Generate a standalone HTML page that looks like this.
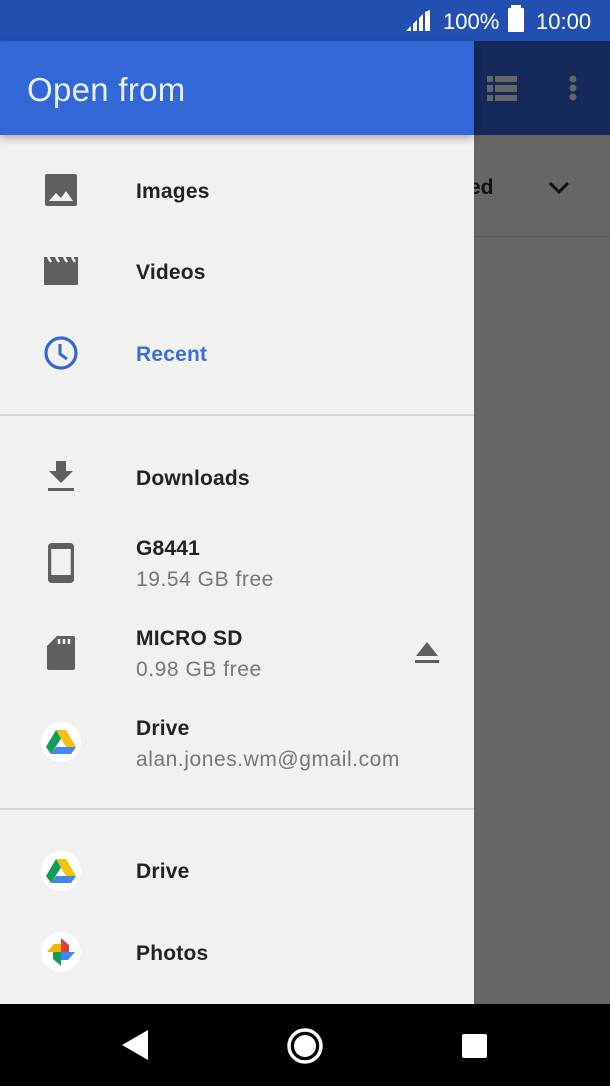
<!DOCTYPE html>
<html><head><meta charset="utf-8"><style>
*{margin:0;padding:0;box-sizing:border-box}
body{width:610px;height:1086px;position:relative;overflow:hidden;font-family:"Liberation Sans",Roboto,sans-serif;background:#666}
.abs{position:absolute}
.t{position:absolute;left:136px;font-size:21px;font-weight:bold;color:#222;line-height:1;letter-spacing:0.2px}
.s{position:absolute;left:136px;font-size:21px;color:#777;line-height:1;letter-spacing:0.55px}
.ic{position:absolute}
</style></head><body>
<div class="abs" style="left:0;top:0;width:610px;height:41px;background:#2350b0"></div>
<svg class="abs" style="left:405px;top:10px" width="26" height="22" viewBox="0 0 26 22" fill="#fff"><path d="M1 21L6 16V21Z"/><path d="M8 21V14L12 10V21Z"/><path d="M14 21V8L18 4V21Z"/><path d="M20 21V2L25 0V21Z"/></svg>
<div class="abs" style="left:443px;top:9px;color:#fff;font-size:22px">100%</div>
<div class="abs" style="left:508px;top:8px;width:16px;height:24px;background:#fff;border-radius:1px"></div>
<div class="abs" style="left:511px;top:5px;width:10px;height:4px;background:#fff"></div>
<div class="abs" style="left:536px;top:9px;color:#fff;font-size:22px">10:00</div>
<div class="abs" style="left:474px;top:41px;width:136px;height:94px;background:#15295a"></div>
<svg class="abs" style="left:487px;top:76px" width="30" height="26" viewBox="0 0 30 26" fill="#666"><rect x="0" y="0" width="6" height="6"/><rect x="8" y="0" width="22" height="6"/><rect x="0" y="9" width="6" height="7"/><rect x="8" y="9" width="22" height="7"/><rect x="0" y="19" width="6" height="6"/><rect x="8" y="19" width="22" height="6"/></svg>
<svg class="abs" style="left:566px;top:74px" width="14" height="30" fill="#666"><circle cx="7" cy="5" r="3.5"/><circle cx="7" cy="14" r="3.5"/><circle cx="7" cy="23" r="3.5"/></svg>
<div class="abs" style="left:474px;top:236px;width:136px;height:1px;background:#5a5a5a"></div>
<div class="abs" style="left:474px;top:176px;width:40px;height:30px;overflow:hidden"><div style="position:absolute;left:-5px;top:0;font-size:21px;color:#111;font-weight:bold">ed</div></div>
<svg class="abs" style="left:547px;top:180px" width="24" height="16"><path d="M3 3 L12 12 L21 3" stroke="#111" stroke-width="3" fill="none"/></svg>
<div class="abs" style="left:0;top:135px;width:474px;height:869px;background:#f1f1f1"></div>
<div class="abs" style="left:0;top:41px;width:474px;height:94px;background:#3367d6;box-shadow:0 3px 8px rgba(0,0,0,.3)"></div>
<div class="abs" style="left:27px;top:71px;font-size:33px;color:#e8efff;letter-spacing:0.3px">Open from</div>

<svg class="ic" style="left:45px;top:174px" width="32" height="32" viewBox="0 0 32 32"><rect x="0" y="0" width="32" height="32" rx="2" fill="#5f5f5f"/><path d="M4 27 L11 19 L16 24 L21 17 L28 27Z" fill="#f1f1f1"/></svg>
<div class="t" style="top:181px">Images</div>
<svg class="ic" style="left:44px;top:257px" width="34" height="28" viewBox="0 0 34 28"><rect x="0" y="6" width="34" height="22" rx="1" fill="#5f5f5f"/><rect x="0" y="0" width="34" height="6" fill="#5f5f5f"/><path d="M4 0l3 5 M12 0l3 5 M20 0l3 5 M28 0l3 5" stroke="#f1f1f1" stroke-width="2.5"/></svg>
<div class="t" style="top:262px">Videos</div>
<svg class="ic" style="left:43px;top:335px" width="36" height="36" viewBox="0 0 36 36"><circle cx="18" cy="18" r="15" stroke="#3367d6" stroke-width="3.2" fill="none"/><path d="M17 9v10l7 5" stroke="#3367d6" stroke-width="3" fill="none"/></svg>
<div class="t" style="top:344px;color:#3a6fd8">Recent</div>
<div class="abs" style="left:0;top:414px;width:474px;height:2px;background:#d8d8d8"></div>

<svg class="ic" style="left:48px;top:461px" width="26" height="32" viewBox="0 0 26 32"><path d="M8 0h10v10h7L13 22 1 10h7z" fill="#5f5f5f"/><rect x="0" y="27" width="26" height="3" fill="#5f5f5f"/></svg>
<div class="t" style="top:468px">Downloads</div>
<svg class="ic" style="left:48px;top:543px" width="26" height="40" viewBox="0 0 26 40"><rect x="1.5" y="1.5" width="23" height="37" rx="3" stroke="#5f5f5f" stroke-width="3.5" fill="none"/><rect x="1" y="32" width="24" height="7" fill="#5f5f5f"/><rect x="1" y="1" width="24" height="5" fill="#5f5f5f"/></svg>
<div class="t" style="top:538px">G8441</div>
<div class="s" style="top:569px">19.54 GB free</div>
<svg class="ic" style="left:47px;top:636px" width="28" height="34" viewBox="0 0 28 34"><path d="M10 0h16a2 2 0 0 1 2 2v30a2 2 0 0 1-2 2H2a2 2 0 0 1-2-2V10z" fill="#5f5f5f"/><path d="M12 3v5 M17 3v5 M22 3v5" stroke="#f1f1f1" stroke-width="2.5"/></svg>
<div class="t" style="top:628px">MICRO SD</div>
<div class="s" style="top:659px">0.98 GB free</div>
<svg class="ic" style="left:415px;top:641px" width="24" height="24" viewBox="0 0 24 24"><path d="M12 1L23 15H1z" fill="#5f5f5f"/><rect x="0" y="19" width="24" height="3" fill="#5f5f5f"/></svg>

<svg class="ic" style="left:41px;top:722px" width="40" height="40" viewBox="0 0 40 40"><circle cx="20" cy="20" r="20" fill="#fff"/><path d="M15 8h10l10 17H25z" fill="#f4c20d"/><path d="M10 32l5-7h20l-5 7z" fill="#4285f4"/><path d="M5 25l10-17 5 8.5-10 15.5z" fill="#0f9d58"/></svg>
<div class="t" style="top:718px">Drive</div>
<div class="s" style="top:749px">alan.jones.wm@gmail.com</div>
<div class="abs" style="left:0;top:808px;width:474px;height:2px;background:#d8d8d8"></div>

<svg class="ic" style="left:41px;top:851px" width="40" height="40" viewBox="0 0 40 40"><circle cx="20" cy="20" r="20" fill="#fff"/><path d="M15 8h10l10 17H25z" fill="#f4c20d"/><path d="M10 32l5-7h20l-5 7z" fill="#4285f4"/><path d="M5 25l10-17 5 8.5-10 15.5z" fill="#0f9d58"/></svg>
<div class="t" style="top:861px">Drive</div>
<svg class="ic" style="left:41px;top:932px" width="40" height="40" viewBox="0 0 40 40"><circle cx="20" cy="20" r="20" fill="#fff"/><path d="M20 20V6l8 7v7z" fill="#db4437"/><path d="M20 20h14l-7 8h-7z" fill="#4285f4"/><path d="M20 20v14l-8-7v-7z" fill="#0f9d58"/><path d="M20 20H6l7-8h7z" fill="#f4b400"/></svg>
<div class="t" style="top:943px">Photos</div>

<div class="abs" style="left:0;top:1004px;width:610px;height:82px;background:#000"></div>
<svg class="abs" style="left:120px;top:1028px" width="30" height="34"><path d="M28 2v30L2 17z" fill="#fff"/></svg>
<svg class="abs" style="left:285px;top:1026px" width="40" height="40"><circle cx="20" cy="20" r="16" stroke="#fff" stroke-width="3.5" fill="none"/><circle cx="20" cy="20" r="11" fill="#fff"/></svg>
<div class="abs" style="left:462px;top:1034px;width:25px;height:24px;background:#fff;border-radius:2px"></div>
</body></html>
